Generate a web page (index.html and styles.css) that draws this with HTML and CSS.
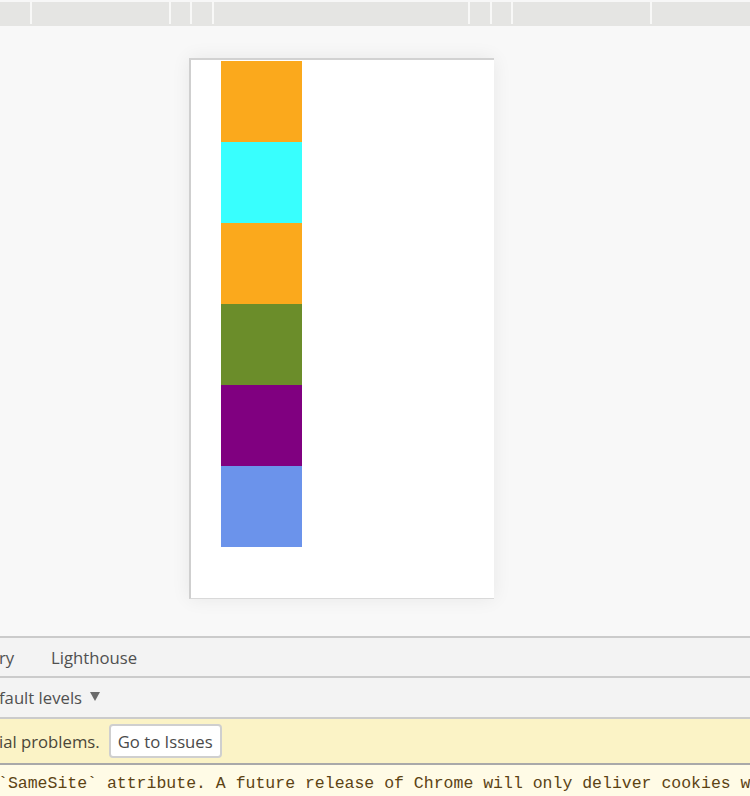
FILE: index.html
```html
<!DOCTYPE html>
<html>
<head>
<meta charset="utf-8">
<link rel="stylesheet" href="styles.css">
</head>
<body>
<div class="topbar">
  <div class="tracks">
    <span></span><i></i><span></span><i></i><span></span><i></i><span></span><i></i><span></span><i></i><span></span><i></i><span></span><i></i><span></span><i></i><span></span>
  </div>
</div>
<div class="stage">
  <div class="device">
    <div class="box orange"></div>
    <div class="box aqua"></div>
    <div class="box orange"></div>
    <div class="box green"></div>
    <div class="box purple"></div>
    <div class="box blue"></div>
  </div>
</div>
<div class="drawer">
  <div class="tabs">
    <span class="tab first">ry</span>
    <span class="tab">Lighthouse</span>
  </div>
  <div class="toolbar">
    <span class="levels">fault levels</span>
    <span class="caret"></span>
  </div>
  <div class="issues">
    <span class="issues-text">ial problems.</span>
    <button class="issues-btn">Go to Issues</button>
  </div>
  <div class="message">
    <div class="msg-line">`SameSite` attribute. A future release of Chrome will only deliver cookies with cross-site requests</div>
    <div class="msg-line">if they are set with `SameSite=None` and `Secure`. You can review cookies in developer tools</div>
  </div>
</div>
</body>
</html>
```
FILE: styles.css
```css
html, body {
  margin: 0;
  padding: 0;
}
body {
  width: 750px;
  height: 796px;
  overflow: hidden;
  background: #f8f8f8;
  font-family: "Open Sans", "Noto Sans", sans-serif;
}
.topbar {
  height: 26px;
  padding-top: 2px;
  box-sizing: border-box;
  background: #f7f7f7;
}
.tracks {
  height: 24px;
  background: #e5e5e3;
  display: grid;
  grid-template-columns: 30px 2px 137px 2px 19px 2px 20px 2px 254px 2px 20px 2px 19px 2px 137px 2px 1fr;
  align-items: start;
}
.tracks i {
  display: block;
  height: 22px;
  background: #f8f8f7;
}
.stage {
  height: 610px;
  box-sizing: border-box;
  padding: 32px 0 0 189px;
  background: #f8f8f8;
}
.device {
  width: 305px;
  height: 541px;
  box-sizing: border-box;
  background: #ffffff;
  border-top: 2px solid #d2d2d2;
  border-left: 2px solid #cfcfcf;
  border-bottom: 1px solid #d9d9d9;
  padding: 1px 0 0 30px;
  box-shadow: 0 0 18px rgba(0, 0, 0, 0.07);
}
.box {
  width: 81px;
  height: 81px;
}
.orange { background: #fba91c; }
.aqua { background: #38fffe; }
.green { background: #6b8d2a; }
.purple { background: #800080; }
.blue { background: #6b93eb; }
.drawer {
  height: 160px;
}
.tabs {
  height: 40px;
  box-sizing: border-box;
  border-top: 2px solid #cbcbcb;
  background: #f3f3f3;
  display: flex;
  align-items: center;
  font-size: 16.7px;
  color: #505050;
}
.tab.first {
  margin-left: -1px;
  width: 52px;
}
.toolbar {
  height: 41px;
  box-sizing: border-box;
  border-top: 2px solid #cbcbcb;
  background: #f3f3f3;
  display: flex;
  align-items: center;
  font-size: 16.7px;
  color: #505050;
}
.levels {
  margin-left: -1px;
}
.caret {
  margin-left: 8px;
  width: 0;
  height: 0;
  border-left: 5px solid transparent;
  border-right: 5px solid transparent;
  border-top: 9px solid #6b6b6b;
  margin-top: -3px;
}
.issues {
  height: 46px;
  box-sizing: border-box;
  border-top: 2px solid #cbcbcb;
  background: #fbf3c6;
  display: flex;
  align-items: center;
  font-size: 16.7px;
  color: #4a4638;
}
.issues-text {
  margin-left: -1px;
}
.issues-btn {
  margin-left: 9px;
  height: 34px;
  width: 113px;
  box-sizing: border-box;
  border: 2px solid #cfcfcf;
  border-radius: 4px;
  background: #ffffff;
  font-family: "Open Sans", "Noto Sans", sans-serif;
  font-size: 16.7px;
  color: #4a4a4a;
  padding: 0;
}
.message {
  border-top: 2px solid #a9a9a9;
  background: #fffbe6;
  height: 33px;
  overflow: hidden;
  padding-top: 9px;
  box-sizing: border-box;
}
.msg-line {
  font-family: "Liberation Mono", "DejaVu Sans Mono", monospace;
  font-size: 16.5px;
  line-height: 20px;
  color: #5c4314;
  white-space: nowrap;
  margin-left: -2px;
}
```
